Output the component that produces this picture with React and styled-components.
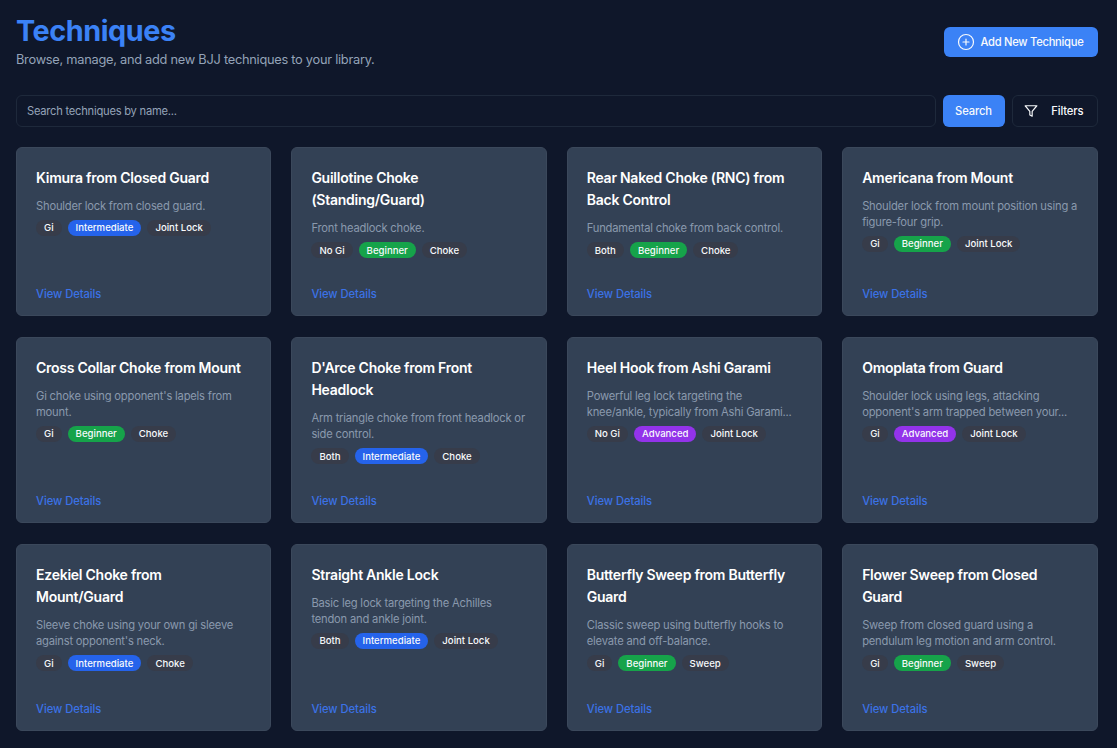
import React from "react";
import styled, { createGlobalStyle } from "styled-components";
import { CirclePlus } from "lucide-react";
import { FiFilter } from "react-icons/fi";

const Global = createGlobalStyle`
  html, body { margin: 0; padding: 0; background: #0f172a; }
  body { font-family: Inter, "Liberation Sans", sans-serif; }
  * { box-sizing: border-box; }
`;

const Page = styled.main`
  width: 1117px;
  height: 748px;
  overflow: hidden;
  padding: 15px 19.5px 0 16px;
  background: #0f172a;
`;
const Header = styled.header`
  display: flex;
  justify-content: space-between;
  align-items: flex-start;
  height: 80px;
`;
const Title = styled.h1`
  margin: 0;
  font-size: 28.8px;
  line-height: 32px;
  font-weight: 700;
  letter-spacing: -0.45px;
  color: #3b82f6;
`;
const Subtitle = styled.p`
  margin: 5px 0 0;
  font-size: 12.8px;
  line-height: 15px;
  letter-spacing: -0.26px;
  color: #94a3b8;
`;
const AddButton = styled.button`
  display: flex;
  align-items: center;
  gap: 6px;
  height: 30px;
  margin-top: 12px;
  padding: 0 14px 0 13px;
  border: 0;
  border-radius: 6px;
  background: #3b82f6;
  color: #f8fafc;
  font: 500 11.2px Inter, sans-serif;
  letter-spacing: -0.28px;
`;
const SearchRow = styled.div`
  display: flex;
  gap: 7px;
  height: 32px;
  margin-bottom: 20px;
`;
const SearchInput = styled.input`
  flex: 1;
  min-width: 0;
  padding: 0 10px;
  border: 1px solid #1e293b;
  border-radius: 6px;
  background: #0f172a;
  color: #f8fafc;
  font: 400 11.2px Inter, sans-serif;
  letter-spacing: -0.25px;
  &::placeholder { color: #94a3b8; opacity: 1; }
`;
const SearchButton = styled.button`
  width: 62px;
  border: 0;
  border-radius: 6px;
  background: #3b82f6;
  color: #f8fafc;
  font: 500 11.2px Inter, sans-serif;
  letter-spacing: -0.1px;
`;
const FilterButton = styled.button`
  display: flex;
  align-items: center;
  justify-content: space-between;
  width: 86px;
  padding: 0 13px 0 11px;
  border: 1px solid #1e293b;
  border-radius: 6px;
  background: #0f172a;
  color: #f8fafc;
  font: 500 11.2px Inter, sans-serif;
  letter-spacing: -0.1px;
`;
const Grid = styled.section`
  display: grid;
  grid-template-columns: repeat(4, 1fr);
  grid-template-rows: 169px 186px 187px;
  gap: 21px 20px;
`;
const Card = styled.article`
  display: flex;
  flex-direction: column;
  padding: 19px 19px 14px;
  border: 1px solid #3b485b;
  border-radius: 6px;
  background: #334155;
`;
const CardTitle = styled.h2`
  margin: 0 0 8.5px;
  font-size: 14px;
  line-height: 22.4px;
  font-weight: 600;
  letter-spacing: -0.25px;
  color: #ffffff;
`;
const Description = styled.p`
  margin: 0;
  font-size: 11.2px;
  line-height: 16px;
  letter-spacing: -0.2px;
  color: #8a99ad;
`;
const Tags = styled.div`
  display: flex;
  gap: 6px;
  margin-top: 6px;
`;
const Tag = styled.span`
  display: inline-flex;
  align-items: center;
  height: 16px;
  padding: 0 8px;
  border-radius: 999px;
  font-size: 9.6px;
  font-weight: 500;
  color: #f8fafc;
  background: ${({ $level }) =>
    ({ Beginner: "#16a34a", Intermediate: "#2563eb", Advanced: "#9333ea" }[$level] || "#373c4a")};
`;
const Details = styled.a`
  margin-top: auto;
  font-size: 11.2px;
  line-height: 14px;
  font-weight: 500;
  letter-spacing: -0.05px;
  color: #3b72e6;
`;

const techniques = [
  ["Kimura from Closed Guard", "Shoulder lock from closed guard.", "Gi", "Intermediate", "Joint Lock"],
  ["Guillotine Choke (Standing/Guard)", "Front headlock choke.", "No Gi", "Beginner", "Choke"],
  ["Rear Naked Choke (RNC) from Back Control", "Fundamental choke from back control.", "Both", "Beginner", "Choke"],
  ["Americana from Mount", "Shoulder lock from mount position using a figure-four grip.", "Gi", "Beginner", "Joint Lock"],
  ["Cross Collar Choke from Mount", "Gi choke using opponent's lapels from mount.", "Gi", "Beginner", "Choke"],
  ["D'Arce Choke from Front Headlock", "Arm triangle choke from front headlock or side control.", "Both", "Intermediate", "Choke"],
  ["Heel Hook from Ashi Garami", "Powerful leg lock targeting the knee/ankle, typically from Ashi Garami...", "No Gi", "Advanced", "Joint Lock"],
  ["Omoplata from Guard", "Shoulder lock using legs, attacking opponent's arm trapped between your...", "Gi", "Advanced", "Joint Lock"],
  ["Ezekiel Choke from Mount/Guard", "Sleeve choke using your own gi sleeve against opponent's neck.", "Gi", "Intermediate", "Choke"],
  ["Straight Ankle Lock", "Basic leg lock targeting the Achilles tendon and ankle joint.", "Both", "Intermediate", "Joint Lock"],
  ["Butterfly Sweep from Butterfly Guard", "Classic sweep using butterfly hooks to elevate and off-balance.", "Gi", "Beginner", "Sweep"],
  ["Flower Sweep from Closed Guard", "Sweep from closed guard using a pendulum leg motion and arm control.", "Gi", "Beginner", "Sweep"],
];

export default function App() {
  return (
    <Page>
      <Global />
      <Header>
        <div>
          <Title>Techniques</Title>
          <Subtitle>Browse, manage, and add new BJJ techniques to your library.</Subtitle>
        </div>
        <AddButton><CirclePlus size={18} strokeWidth={1.6} />Add New Technique</AddButton>
      </Header>
      <SearchRow>
        <SearchInput placeholder="Search techniques by name..." />
        <SearchButton>Search</SearchButton>
        <FilterButton><FiFilter size={14} />Filters</FilterButton>
      </SearchRow>
      <Grid>
        {techniques.map(([title, desc, gi, level, type]) => (
          <Card key={title}>
            <CardTitle>{title}</CardTitle>
            <Description>{desc}</Description>
            <Tags>
              <Tag>{gi}</Tag>
              <Tag $level={level}>{level}</Tag>
              <Tag>{type}</Tag>
            </Tags>
            <Details>View Details</Details>
          </Card>
        ))}
      </Grid>
    </Page>
  );
}
